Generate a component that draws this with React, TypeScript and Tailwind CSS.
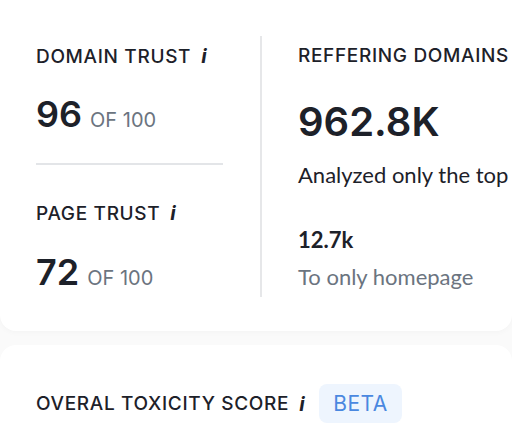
import React from "react";

const heading = "font-['Inter',sans-serif] text-[19px] font-medium tracking-[0.035em] text-[#1d2129] leading-none";

const Info = () => (
  <span className="ml-[10px] font-['Inter',sans-serif] italic font-bold text-[20px] leading-none text-[#1d2129]">i</span>
);

const Score: React.FC<{ value: string }> = ({ value }) => (
  <div className="flex items-baseline gap-2 font-['Inter',sans-serif]">
    <span className="text-[36px] font-semibold text-[#1d2129] leading-none">{value}</span>
    <span className="text-[20px] text-[#6b7480] leading-none">OF 100</span>
  </div>
);

export default function App() {
  return (
    <div className="w-[512px] h-[440px] overflow-hidden bg-[#fafafa]">
      <div className="h-[331px] bg-white rounded-br-2xl rounded-bl-2xl shadow-[0_1px_6px_rgba(0,0,0,0.03)] flex">
        <div className="w-[260px] shrink-0 pl-9 pr-[37px] pt-[46px]">
          <div className={`${heading} flex items-center`}>
            DOMAIN TRUST <Info />
          </div>
          <div className="mt-[30px]">
            <Score value="96" />
          </div>
          <div className="mt-[31px] h-[2px] bg-[#e3e5e8]" />
          <div className={`${heading} mt-[38px] flex items-center`}>
            PAGE TRUST <Info />
          </div>
          <div className="mt-[31px]">
            <Score value="72" />
          </div>
        </div>
        <div className="mt-9 h-[261px] w-[2px] shrink-0 bg-[#e6e7e9]" />
        <div className="pl-9 pt-[46px] whitespace-nowrap">
          <div className={heading}>REFFERING DOMAINS</div>
          <div className="mt-[37px] font-['Inter',sans-serif] text-[40px] font-semibold leading-none text-[#1d2129]">962.8K</div>
          <div className="mt-[16px] font-['Lato',sans-serif] text-[22px] leading-[33px] text-[#1d2129]">Analyzed only the top 100</div>
          <div className="mt-[32px] font-['Lato',sans-serif] text-[22px] leading-[33px] font-bold text-[#1d2129]">12.7k</div>
          <div className="mt-[4px] font-['Lato',sans-serif] text-[22px] leading-[33px] text-[#6b7480]">To only homepage</div>
        </div>
      </div>
      <div className="mt-[14px] h-[200px] bg-white rounded-tl-2xl rounded-tr-2xl pl-9 pt-[39px]">
        <div className={`${heading} flex items-center`}>
          OVERAL TOXICITY SCORE <Info />
          <span className="ml-[14px] rounded-lg bg-[#eef5fe] px-[14px] py-[9px] text-[21px] font-normal tracking-[0.02em] text-[#4a88e0]">BETA</span>
        </div>
      </div>
    </div>
  );
}
